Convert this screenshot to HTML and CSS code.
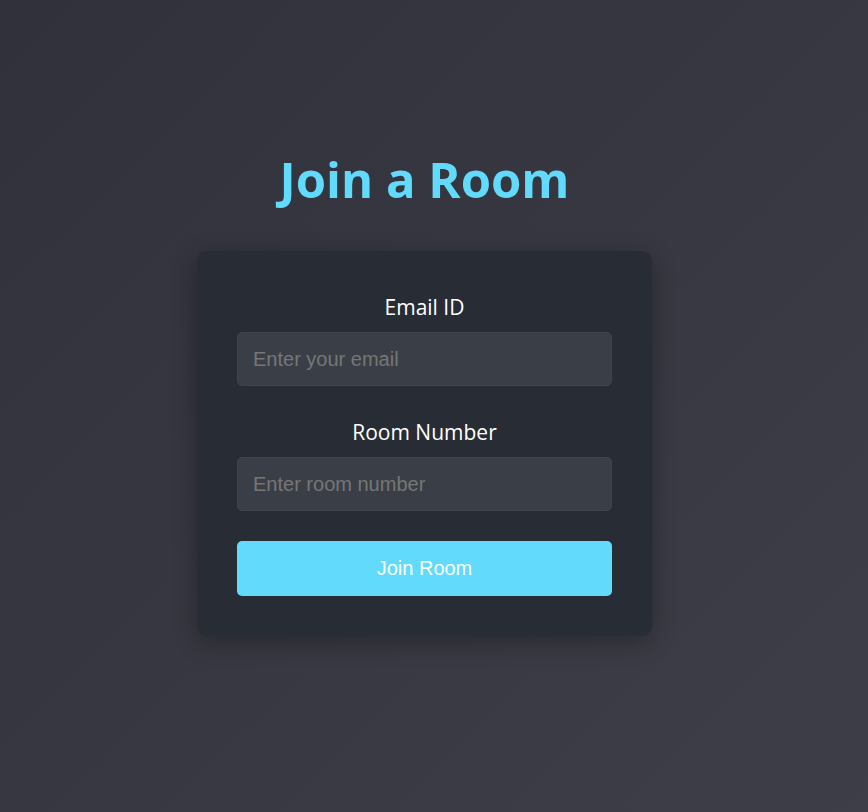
FILE: index.html
```html
<!DOCTYPE html>
<html lang="en">
<head>
<meta charset="utf-8">
<title>Join a Room</title>
<link rel="stylesheet" href="styles.css">
</head>
<body>
<main class="page">
  <h1 class="title">Join a Room</h1>
  <form class="card">
    <label class="label" for="email">Email ID</label>
    <input class="field" id="email" type="email" placeholder="Enter your email">
    <label class="label label-spaced" for="room">Room Number</label>
    <input class="field" id="room" type="text" placeholder="Enter room number">
    <button class="btn" type="button">Join Room</button>
  </form>
</main>
</body>
</html>
```

FILE: styles.css
```css
html, body {
  margin: 0;
  padding: 0;
  height: 100%;
}
body {
  background: linear-gradient(135deg, #31313b 0%, #3e3e48 100%);
  font-family: "Open Sans", "Noto Sans", sans-serif;
  color: #ffffff;
}
.page {
  min-height: 100%;
  box-sizing: border-box;
  display: flex;
  flex-direction: column;
  align-items: center;
  padding-top: 147px;
  padding-right: 19px;
}
.title {
  margin: 0 0 40px;
  font-size: 49px;
  line-height: 64px;
  font-weight: 700;
  color: #61dafb;
}
.card {
  width: 375px;
  padding: 40px;
  background: #282c34;
  border-radius: 10px;
  box-shadow: 0 6px 24px rgba(0, 0, 0, 0.3);
  display: flex;
  flex-direction: column;
  align-items: stretch;
}
.label {
  text-align: center;
  font-size: 21px;
  line-height: 32px;
  margin-bottom: 9px;
  color: #ffffff;
}
.label-spaced {
  margin-top: 30px;
}
.field {
  box-sizing: border-box;
  height: 54px;
  padding: 0 15px;
  background: #3a3f47;
  border: 1px solid #3f444c;
  border-radius: 5px;
  font-family: "Liberation Sans", Arial, sans-serif;
  font-size: 20px;
  color: #ffffff;
  outline: none;
}
.field::placeholder {
  color: #767676;
}
.btn {
  margin-top: 30px;
  height: 55px;
  background: #61dafb;
  border: none;
  border-radius: 5px;
  font-family: "Liberation Sans", Arial, sans-serif;
  font-size: 20px;
  color: #ffffff;
  cursor: pointer;
}
```
